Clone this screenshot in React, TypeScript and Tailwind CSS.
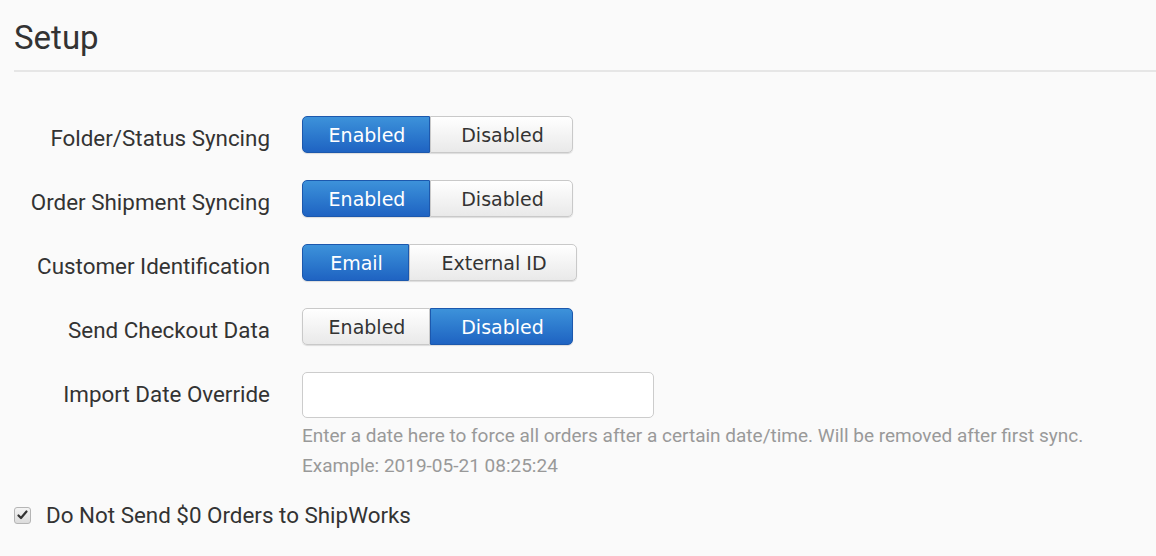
import React from "react";

const rows: { label: string; opts: { t: string; w: number }[]; active: number }[] = [
  { label: "Folder/Status Syncing", opts: [{ t: "Enabled", w: 128 }, { t: "Disabled", w: 143 }], active: 0 },
  { label: "Order Shipment Syncing", opts: [{ t: "Enabled", w: 128 }, { t: "Disabled", w: 143 }], active: 0 },
  { label: "Customer Identification", opts: [{ t: "Email", w: 107 }, { t: "External ID", w: 168 }], active: 0 },
  { label: "Send Checkout Data", opts: [{ t: "Enabled", w: 128 }, { t: "Disabled", w: 143 }], active: 1 },
];

function Seg({ opts, active }: { opts: { t: string; w: number }[]; active: number }) {
  return (
    <div className="flex h-[37px] rounded-[5px] shadow-[0_1px_1px_rgba(0,0,0,0.12)]">
      {opts.map((o, i) => {
        const on = i === active;
        const first = i === 0;
        const last = i === opts.length - 1;
        return (
          <div
            key={o.t}
            style={{ width: o.w }}
            className={
              "flex items-center justify-center pl-[2px] pt-[2px] text-[19px] font-['DejaVu_Sans',Verdana,sans-serif] " +
              (first ? "rounded-l-[5px] " : "") +
              (last ? "rounded-r-[5px] " : "") +
              (on
                ? "bg-gradient-to-b from-[#3d92da] to-[#1f63c2] border border-[#1c58ad] text-white"
                : "bg-gradient-to-b from-[#ffffff] to-[#e9e9e9] border border-[#c9c9c9] text-[#333]")
            }
          >
            {o.t}
          </div>
        );
      })}
    </div>
  );
}

export default function App() {
  return (
    <div className="w-[1156px] h-[556px] bg-[#fafafa] font-['Roboto',sans-serif] text-[#333] overflow-hidden">
      <div className="pl-[14px] pt-[18px]">
        <h1 className="text-[33px] leading-[40px] text-[#333]">Setup</h1>
        <div className="mt-[12px] h-[2px] bg-[#e6e6e6]" />
      </div>
      <div className="pl-[14px] pt-[44px] flex flex-col gap-[27px]">
        {rows.map((r) => (
          <div key={r.label} className="flex items-center">
            <div className="w-[256px] text-right text-[22.4px] leading-[26px] pt-[6px]">{r.label}</div>
            <div className="ml-[32px]">
              <Seg opts={r.opts} active={r.active} />
            </div>
          </div>
        ))}
      </div>
      <div className="pl-[14px] pt-[27px] flex">
        <div className="w-[256px] text-right text-[22.4px] leading-[26px] pt-[9px]">Import Date Override</div>
        <div className="ml-[32px]">
          <div className="w-[352px] h-[46px] rounded-[5px] border border-[#cccccc] bg-white" />
          <div className="mt-[7px] text-[19px] leading-[22px] text-[#999]">
            Enter a date here to force all orders after a certain date/time. Will be removed after first sync.
          </div>
          <div className="mt-[8px] text-[19px] leading-[22px] text-[#999]">Example: 2019-05-21 08:25:24</div>
        </div>
      </div>
      <div className="pl-[14px] pt-[25px] flex items-center">
        <div className="w-[17px] h-[17px] rounded-[3px] border border-[#b5b5b5] bg-gradient-to-b from-[#f4f4f4] to-[#dcdcdc] flex items-center justify-center">
          <svg width="11" height="10" viewBox="0 0 11 10">
            <path d="M1.5 5.5 L4 8 L9.5 1.5" fill="none" stroke="#333" strokeWidth="2.2" strokeLinecap="round" strokeLinejoin="round" />
          </svg>
        </div>
        <span className="ml-[15px] text-[22.4px] leading-[26px]">Do Not Send $0 Orders to ShipWorks</span>
      </div>
    </div>
  );
}
